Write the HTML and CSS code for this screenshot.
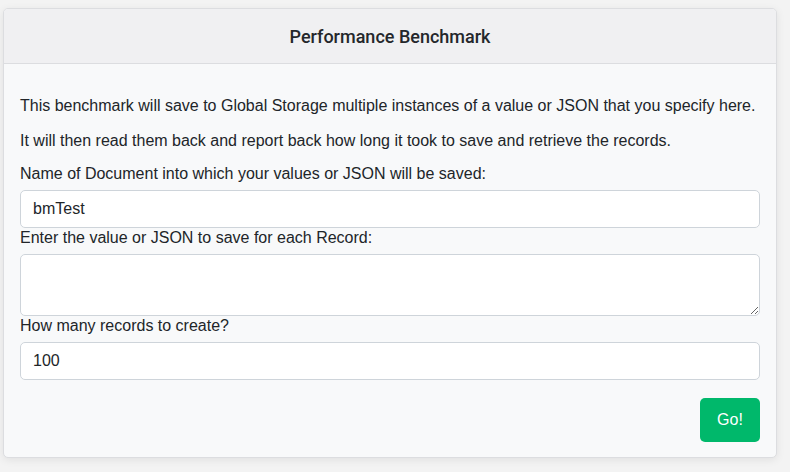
FILE: index.html
```html
<!DOCTYPE html>
<html>
<head>
<meta charset="utf-8">
<link rel="stylesheet" href="styles.css">
</head>
<body>
<div class="card">
  <div class="card-header">Performance Benchmark</div>
  <div class="card-body">
    <p class="intro">This benchmark will save to Global Storage multiple instances of a value or JSON that you specify here.</p>
    <p class="intro last">It will then read them back and report back how long it took to save and retrieve the records.</p>
    <label class="label">Name of Document into which your values or JSON will be saved:</label>
    <input class="control" type="text" value="bmTest">
    <label class="label">Enter the value or JSON to save for each Record:</label>
    <textarea class="control area"></textarea>
    <label class="label">How many records to create?</label>
    <input class="control" type="text" value="100">
    <div class="actions">
      <button class="btn-go" type="button">Go!</button>
    </div>
  </div>
</div>
</body>
</html>
```

FILE: styles.css
```css
html, body {
  margin: 0;
  padding: 0;
  background: #f3f3f3;
}
body {
  font-family: "Liberation Sans", Arial, sans-serif;
  font-size: 16px;
  color: #212529;
  padding: 8px 13px 14px 3px;
}
.card {
  width: 774px;
  box-sizing: border-box;
  border: 1px solid #dcdde0;
  border-radius: 5px;
  background: #f8f9fa;
  box-shadow: 0 2px 8px rgba(0, 0, 0, 0.08);
  overflow: hidden;
}
.card-header {
  height: 54px;
  display: flex;
  align-items: center;
  justify-content: center;
  background: #f0f0f2;
  border-bottom: 1px solid #dcdde0;
  font-family: Roboto, "Liberation Sans", sans-serif;
  font-size: 18px;
  font-weight: 500;
  color: #24272b;
}
.card-body {
  padding: 32px 16px 15px 16px;
  display: flex;
  flex-direction: column;
}
.intro {
  margin: 0 0 16px 0;
  line-height: 19px;
}
.intro.last {
  margin-bottom: 14px;
}
.label {
  line-height: 19px;
  margin: 0 0 7px 0;
}
.control {
  display: block;
  box-sizing: border-box;
  width: 100%;
  height: 38px;
  margin: 0;
  padding: 6px 12px;
  font-family: inherit;
  font-size: 16px;
  color: #212529;
  background: #fff;
  border: 1px solid #ced4da;
  border-radius: 5px;
}
.area {
  height: 62px;
  resize: vertical;
}
.actions {
  display: flex;
  justify-content: flex-end;
  margin-top: 18px;
}
.btn-go {
  width: 60px;
  height: 44px;
  border: none;
  border-radius: 5px;
  background: #00b86b;
  color: #fff;
  font-family: inherit;
  font-size: 16px;
}
```
